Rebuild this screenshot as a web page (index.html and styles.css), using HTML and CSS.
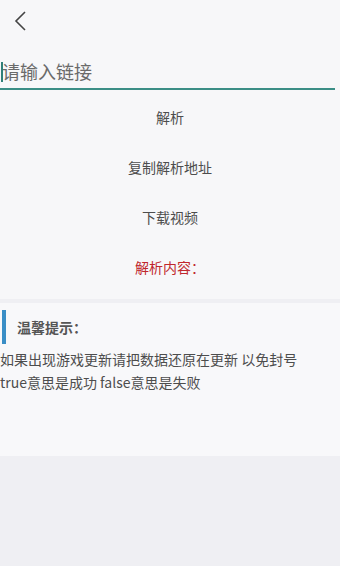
FILE: index.html
```html
<!DOCTYPE html>
<html lang="zh">
<head>
    <meta charset="UTF-8">
    <title>解析</title>
    <link rel="stylesheet" href="styles.css">
</head>
<body>
    <div class="top">
        <div class="header">
            <svg class="back" width="20" height="24" viewBox="0 0 20 24">
                <path d="M13 3 L4 12 L13 21" fill="none" stroke="#444" stroke-width="1.6"/>
            </svg>
        </div>
        <div class="inputRow">
            <span class="cursor"></span>
            <input class="ipt" type="text" placeholder="请输入链接">
        </div>
        <div class="btnList">
            <div class="btn">解析</div>
            <div class="btn">复制解析地址</div>
            <div class="btn">下载视频</div>
            <div class="btn result">解析内容：</div>
        </div>
    </div>
    <div class="tips">
        <div class="tipTitle">温馨提示：</div>
        <p class="tipText">如果出现游戏更新请把数据还原在更新 以免封号<br>true意思是成功 false意思是失败</p>
    </div>
</body>
</html>
```

FILE: styles.css
```css
html,body{
    margin: 0;
    padding: 0;
}
body{
    width: 340px;
    height: 566px;
    background-color: #efeff3;
    font-family: "Noto Sans CJK SC", "Noto Sans", sans-serif;
    overflow: hidden;
}
.top{
    background-color: #f7f7f9;
    padding-bottom: 7px;
}
.header{
    height: 44px;
    display: flex;
    align-items: center;
    padding-left: 12px;
}
.back{
    margin-top: -3px;
}
.inputRow{
    position: relative;
    margin: 10px 5px 0 0;
    height: 34px;
    border-bottom: 2px solid #3b8e86;
}
.ipt{
    border: 0px;
    width: 100%;
    height: 34px;
    padding: 0 0 0 2px;
    background: transparent;
    font-size: 18px;
    font-family: "Noto Sans CJK SC", sans-serif;
    outline: none;
}
.ipt::placeholder{
    color: #6a6a6a;
}
.cursor{
    position: absolute;
    left: 1px;
    top: 8px;
    width: 2px;
    height: 20px;
    background-color: #2f7f78;
}
.btnList{
    margin-top: 2px;
}
.btn{
    height: 50px;
    line-height: 50px;
    text-align: center;
    font-size: 14px;
    color: #4d4d4d;
}
.result{
    color: #c0272d;
}
.tips{
    margin-top: 4px;
    background-color: #f8f8fa;
    height: 153px;
    padding-top: 7px;
    box-sizing: border-box;
}
.tipTitle{
    margin-left: 2px;
    height: 34px;
    line-height: 34px;
    border-left: 4px solid #3a8ec6;
    padding-left: 11px;
    font-size: 14px;
    font-weight: bold;
    color: #555;
}
.tipText{
    margin: 4px 0 0 0;
    font-size: 14px;
    line-height: 23px;
    color: #4d4d4d;
}
```
